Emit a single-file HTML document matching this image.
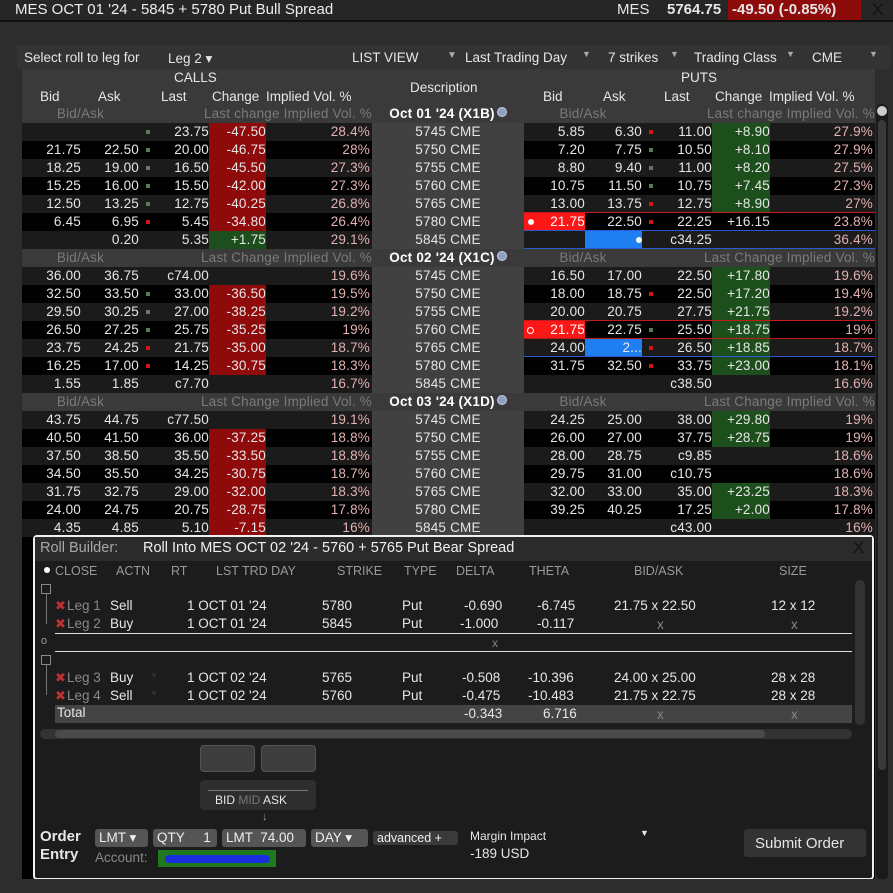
<!DOCTYPE html>
<html><head><meta charset="utf-8"><style>
*{margin:0;padding:0;box-sizing:border-box}
body{width:893px;height:893px;background:#2d2d2d;font-family:"Liberation Sans",sans-serif;color:#e6e6e6;overflow:hidden;position:relative;font-size:13.5px}
.abs{position:absolute}
.top{left:0;top:0;width:893px;height:22px;background:#262626;border-bottom:2px solid #111}
.r{position:absolute;left:22px;width:853px;height:18px;display:flex;line-height:18px;font-size:13.5px;letter-spacing:.2px}
.r i{font-style:normal;display:block;height:18px;text-align:right;white-space:nowrap;position:relative}
.b1{width:59px}.a1{width:58px}.m1{width:18px}.l1{width:52px}.h1{width:57px}.v1{width:106px;padding-right:2px}
.d{width:152px;text-align:center!important;background:#414141}
.b2{width:61px}.a2{width:57px}.m2{width:16px}.l2{width:54px}.h2{width:58px}.v2{width:105px;padding-right:2px}
.v1,.v2{color:#e3b1b1}
.o{background:#1b1b1b}.e{background:#000}
.R{background:#8f0a0a}.G{background:#1d4f1d}
s{position:absolute;width:4px;height:4px;top:7px;left:7px}
s.g{background:#5d7a5d}s.rd{background:#d01515}
.sh{background:#3a3a3a;color:#7a7a7a}
.sh .d{color:#fff;font-weight:bold;background:#3a3a3a}
.RB{background:#ff1717!important;color:#fff}.BL{background:#1f7ff0!important}
.dot{position:absolute;width:6px;height:6px;border-radius:50%;background:#fff;top:6px}
.q{display:inline-block;width:10px;height:10px;border-radius:50%;background:#8aa0c8;vertical-align:1px;margin-left:2px;border:1px solid #ccd}
.rb{position:absolute;left:33px;top:535px;width:841px;height:345px;border:2px solid #f0f0f0;border-radius:4px;background:#1c1c1c}
.t{position:absolute;white-space:nowrap}
.hd{color:#9a9a9a;font-size:12.5px}
.gr{color:#888}
.xr{color:#b33;font-size:13px}
.btn{position:absolute;background:#555;border-radius:3px;height:18px;line-height:18px;color:#eee;font-size:13.5px;padding:0 4px}
</style></head><body>
<div class="abs top"></div>
<div class="t" style="left:15px;top:1px;font-size:15px;color:#ededed">MES OCT 01 '24 - 5845 + 5780 Put Bull Spread</div>
<div class="t" style="left:617px;top:1px;font-size:15px">MES</div>
<div class="t" style="left:667px;top:1px;font-size:15px;font-weight:bold">5764.75</div>
<div class="abs" style="left:728px;top:0;width:133px;height:20px;background:#8e0b0b"></div>
<div class="t" style="left:732px;top:1px;font-size:15px;font-weight:bold">-49.50 (-0.85%)</div>
<div class="t" style="left:872px;top:0px;font-size:17px;color:#111">X</div>
<div class="abs" style="left:17px;top:45px;width:873px;height:24px;background:#333"></div>
<div class="t" style="left:24px;top:50px;font-size:13.5px">Select roll to leg for</div>
<div class="t" style="left:168px;top:51px;font-size:13.5px">Leg 2 ▾</div>
<div class="t" style="left:352px;top:50px">LIST VIEW</div><div class="t" style="left:447px;top:50px;font-size:10px;color:#aaa">▼</div>
<div class="t" style="left:465px;top:50px">Last Trading Day</div><div class="t" style="left:582px;top:49px;font-size:9px;color:#aaa">▼</div>
<div class="t" style="left:608px;top:50px">7 strikes</div><div class="t" style="left:670px;top:49px;font-size:9px;color:#aaa">▼</div>
<div class="t" style="left:694px;top:50px">Trading Class</div><div class="t" style="left:786px;top:49px;font-size:9px;color:#aaa">▼</div>
<div class="t" style="left:812px;top:50px">CME</div><div class="t" style="left:869px;top:49px;font-size:9px;color:#aaa">▼</div>
<div class="abs" style="left:22px;top:69px;width:853px;height:36px;background:#3a3a3a"></div>
<div class="t" style="left:174px;top:70px">CALLS</div>
<div class="t" style="left:681px;top:70px">PUTS</div>
<div class="t" style="left:410px;top:80px">Description</div>
<div class="t" style="left:40px;top:89px">Bid</div><div class="t" style="left:98px;top:89px">Ask</div><div class="t" style="left:161px;top:89px">Last</div><div class="t" style="left:212px;top:89px">Change</div><div class="t" style="left:266px;top:89px">Implied Vol. %</div>
<div class="t" style="left:543px;top:89px">Bid</div><div class="t" style="left:603px;top:89px">Ask</div><div class="t" style="left:664px;top:89px">Last</div><div class="t" style="left:715px;top:89px">Change</div><div class="t" style="left:769px;top:89px">Implied Vol. %</div>
<div class="abs" style="left:876px;top:104px;width:12px;height:776px;background:#1a1a1a;border-radius:6px"></div>
<div class="abs" style="left:877px;top:106px;width:10px;height:10px;background:#ccc;border-radius:5px"></div>
<div class="abs" style="left:878px;top:120px;width:8px;height:650px;background:#3a3a3a;border-radius:4px"></div>

<!-- Oct 01 -->
<div class="r sh" style="top:105px"><i style="width:117px;text-align:center">Bid/Ask</i><i style="width:233px">Last change Implied Vol. %</i><i class="d">Oct 01 '24 (X1B)<span class="q"></span></i><i style="width:118px;text-align:center">Bid/Ask</i><i style="width:233px">Last change Implied Vol. %</i></div>
<div class="r o" style="top:123px"><i class="b1"></i><i class="a1"></i><i class="m1"><s class="g"></s></i><i class="l1">23.75</i><i class="h1 R">-47.50</i><i class="v1">28.4%</i><i class="d">5745 CME</i><i class="b2">5.85</i><i class="a2">6.30</i><i class="m2"><s class="rd"></s></i><i class="l2">11.00</i><i class="h2 G">+8.90</i><i class="v2">27.9%</i></div>
<div class="r e" style="top:141px"><i class="b1">21.75</i><i class="a1">22.50</i><i class="m1"><s class="g"></s></i><i class="l1">20.00</i><i class="h1 R">-46.75</i><i class="v1">28%</i><i class="d">5750 CME</i><i class="b2">7.20</i><i class="a2">7.75</i><i class="m2"><s class="g"></s></i><i class="l2">10.50</i><i class="h2 G">+8.10</i><i class="v2">27.9%</i></div>
<div class="r o" style="top:159px"><i class="b1">18.25</i><i class="a1">19.00</i><i class="m1"><s class="g"></s></i><i class="l1">16.50</i><i class="h1 R">-45.50</i><i class="v1">27.3%</i><i class="d">5755 CME</i><i class="b2">8.80</i><i class="a2">9.40</i><i class="m2"><s class="g"></s></i><i class="l2">11.00</i><i class="h2 G">+8.20</i><i class="v2">27.5%</i></div>
<div class="r e" style="top:177px"><i class="b1">15.25</i><i class="a1">16.00</i><i class="m1"><s class="g"></s></i><i class="l1">15.50</i><i class="h1 R">-42.00</i><i class="v1">27.3%</i><i class="d">5760 CME</i><i class="b2">10.75</i><i class="a2">11.50</i><i class="m2"><s class="g"></s></i><i class="l2">10.75</i><i class="h2 G">+7.45</i><i class="v2">27.3%</i></div>
<div class="r o" style="top:195px"><i class="b1">12.50</i><i class="a1">13.25</i><i class="m1"><s class="g"></s></i><i class="l1">12.75</i><i class="h1 R">-40.25</i><i class="v1">26.8%</i><i class="d">5765 CME</i><i class="b2">13.00</i><i class="a2">13.75</i><i class="m2"><s class="rd"></s></i><i class="l2">12.75</i><i class="h2 G">+8.90</i><i class="v2">27%</i></div>
<div class="r e" style="top:213px"><i class="b1">6.45</i><i class="a1">6.95</i><i class="m1"><s class="rd"></s></i><i class="l1">5.45</i><i class="h1 R">-34.80</i><i class="v1">26.4%</i><i class="d">5780 CME</i><i class="b2 RB"><span class="dot" style="left:4px"></span>21.75</i><i class="a2">22.50</i><i class="m2"><s class="rd"></s></i><i class="l2">22.25</i><i class="h2">+16.15</i><i class="v2">23.8%</i></div>
<div class="r o" style="top:231px"><i class="b1"></i><i class="a1">0.20</i><i class="m1"></i><i class="l1">5.35</i><i class="h1 G">+1.75</i><i class="v1">29.1%</i><i class="d">5845 CME</i><i class="b2"></i><i class="a2 BL"><span class="dot" style="left:51px"></span></i><i class="m2"></i><i class="l2">c34.25</i><i class="h2"></i><i class="v2">36.4%</i></div>
<div class="abs" style="left:524px;top:212px;width:351px;height:1px;background:#c21b1b"></div>
<div class="abs" style="left:524px;top:230px;width:351px;height:1px;background:#2a5ad0"></div>
<div class="abs" style="left:524px;top:248px;width:351px;height:1px;background:#2a5ad0"></div>

<!-- Oct 02 -->
<div class="r sh" style="top:249px"><i style="width:117px;text-align:center">Bid/Ask</i><i style="width:233px">Last Change Implied Vol. %</i><i class="d">Oct 02 '24 (X1C)<span class="q"></span></i><i style="width:118px;text-align:center">Bid/Ask</i><i style="width:233px">Last Change Implied Vol. %</i></div>
<div class="r o" style="top:267px"><i class="b1">36.00</i><i class="a1">36.75</i><i class="m1"></i><i class="l1">c74.00</i><i class="h1"></i><i class="v1">19.6%</i><i class="d">5745 CME</i><i class="b2">16.50</i><i class="a2">17.00</i><i class="m2"></i><i class="l2">22.50</i><i class="h2 G">+17.80</i><i class="v2">19.6%</i></div>
<div class="r e" style="top:285px"><i class="b1">32.50</i><i class="a1">33.50</i><i class="m1"><s class="g"></s></i><i class="l1">33.00</i><i class="h1 R">-36.50</i><i class="v1">19.5%</i><i class="d">5750 CME</i><i class="b2">18.00</i><i class="a2">18.75</i><i class="m2"><s class="rd"></s></i><i class="l2">22.50</i><i class="h2 G">+17.20</i><i class="v2">19.4%</i></div>
<div class="r o" style="top:303px"><i class="b1">29.50</i><i class="a1">30.25</i><i class="m1"><s class="g"></s></i><i class="l1">27.00</i><i class="h1 R">-38.25</i><i class="v1">19.2%</i><i class="d">5755 CME</i><i class="b2">20.00</i><i class="a2">20.75</i><i class="m2"></i><i class="l2">27.75</i><i class="h2 G">+21.75</i><i class="v2">19.2%</i></div>
<div class="r e" style="top:321px"><i class="b1">26.50</i><i class="a1">27.25</i><i class="m1"><s class="g"></s></i><i class="l1">25.75</i><i class="h1 R">-35.25</i><i class="v1">19%</i><i class="d">5760 CME</i><i class="b2 RB"><span class="dot" style="left:3px;background:none;border:1px solid #fff;width:7px;height:7px"></span>21.75</i><i class="a2">22.75</i><i class="m2"><s class="g"></s></i><i class="l2">25.50</i><i class="h2 G">+18.75</i><i class="v2">19%</i></div>
<div class="r o" style="top:339px"><i class="b1">23.75</i><i class="a1">24.25</i><i class="m1"><s class="rd"></s></i><i class="l1">21.75</i><i class="h1 R">-35.00</i><i class="v1">18.7%</i><i class="d">5765 CME</i><i class="b2">24.00</i><i class="a2 BL">2...</i><i class="m2"><s class="rd"></s></i><i class="l2">26.50</i><i class="h2 G">+18.85</i><i class="v2">18.7%</i></div>
<div class="r e" style="top:357px"><i class="b1">16.25</i><i class="a1">17.00</i><i class="m1"><s class="rd"></s></i><i class="l1">14.25</i><i class="h1 R">-30.75</i><i class="v1">18.3%</i><i class="d">5780 CME</i><i class="b2">31.75</i><i class="a2">32.50</i><i class="m2"><s class="rd"></s></i><i class="l2">33.75</i><i class="h2 G">+23.00</i><i class="v2">18.1%</i></div>
<div class="r o" style="top:375px"><i class="b1">1.55</i><i class="a1">1.85</i><i class="m1"></i><i class="l1">c7.70</i><i class="h1"></i><i class="v1">16.7%</i><i class="d">5845 CME</i><i class="b2"></i><i class="a2"></i><i class="m2"></i><i class="l2">c38.50</i><i class="h2"></i><i class="v2">16.6%</i></div>
<div class="abs" style="left:524px;top:320px;width:351px;height:1px;background:#c21b1b"></div>
<div class="abs" style="left:524px;top:338px;width:351px;height:1px;background:#c21b1b"></div>
<div class="abs" style="left:524px;top:356px;width:351px;height:1px;background:#2a5ad0"></div>

<!-- Oct 03 -->
<div class="r sh" style="top:393px"><i style="width:117px;text-align:center">Bid/Ask</i><i style="width:233px">Last Change Implied Vol. %</i><i class="d">Oct 03 '24 (X1D)<span class="q"></span></i><i style="width:118px;text-align:center">Bid/Ask</i><i style="width:233px">Last Change Implied Vol. %</i></div>
<div class="r o" style="top:411px"><i class="b1">43.75</i><i class="a1">44.75</i><i class="m1"></i><i class="l1">c77.50</i><i class="h1"></i><i class="v1">19.1%</i><i class="d">5745 CME</i><i class="b2">24.25</i><i class="a2">25.00</i><i class="m2"></i><i class="l2">38.00</i><i class="h2 G">+29.80</i><i class="v2">19%</i></div>
<div class="r e" style="top:429px"><i class="b1">40.50</i><i class="a1">41.50</i><i class="m1"></i><i class="l1">36.00</i><i class="h1 R">-37.25</i><i class="v1">18.8%</i><i class="d">5750 CME</i><i class="b2">26.00</i><i class="a2">27.00</i><i class="m2"></i><i class="l2">37.75</i><i class="h2 G">+28.75</i><i class="v2">19%</i></div>
<div class="r o" style="top:447px"><i class="b1">37.50</i><i class="a1">38.50</i><i class="m1"></i><i class="l1">35.50</i><i class="h1 R">-33.50</i><i class="v1">18.8%</i><i class="d">5755 CME</i><i class="b2">28.00</i><i class="a2">28.75</i><i class="m2"></i><i class="l2">c9.85</i><i class="h2"></i><i class="v2">18.6%</i></div>
<div class="r e" style="top:465px"><i class="b1">34.50</i><i class="a1">35.50</i><i class="m1"></i><i class="l1">34.25</i><i class="h1 R">-30.75</i><i class="v1">18.7%</i><i class="d">5760 CME</i><i class="b2">29.75</i><i class="a2">31.00</i><i class="m2"></i><i class="l2">c10.75</i><i class="h2"></i><i class="v2">18.6%</i></div>
<div class="r o" style="top:483px"><i class="b1">31.75</i><i class="a1">32.75</i><i class="m1"></i><i class="l1">29.00</i><i class="h1 R">-32.00</i><i class="v1">18.3%</i><i class="d">5765 CME</i><i class="b2">32.00</i><i class="a2">33.00</i><i class="m2"></i><i class="l2">35.00</i><i class="h2 G">+23.25</i><i class="v2">18.3%</i></div>
<div class="r e" style="top:501px"><i class="b1">24.00</i><i class="a1">24.75</i><i class="m1"></i><i class="l1">20.75</i><i class="h1 R">-28.75</i><i class="v1">17.8%</i><i class="d">5780 CME</i><i class="b2">39.25</i><i class="a2">40.25</i><i class="m2"></i><i class="l2">17.25</i><i class="h2 G">+2.00</i><i class="v2">17.8%</i></div>
<div class="r o" style="top:519px"><i class="b1">4.35</i><i class="a1">4.85</i><i class="m1"></i><i class="l1">5.10</i><i class="h1 R">-7.15</i><i class="v1">16%</i><i class="d">5845 CME</i><i class="b2"></i><i class="a2"></i><i class="m2"></i><i class="l2">c43.00</i><i class="h2"></i><i class="v2">16%</i></div>
<div class="abs" style="left:22px;top:537px;width:853px;height:343px;background:#000"></div>

<!-- Roll builder -->
<div class="rb"></div>
<div class="abs" style="left:35px;top:537px;width:837px;height:24px;background:#2b2b2b"></div>
<div class="t" style="left:40px;top:540px;font-size:14.5px;color:#a8a8a8">Roll Builder:</div>
<div class="t" style="left:143px;top:540px;font-size:14.5px;color:#f0f0f0">Roll Into MES OCT 02 '24 - 5760 + 5765 Put Bear Spread</div>
<div class="t" style="left:853px;top:538px;font-size:17px;color:#111">X</div>
<div class="abs" style="left:44px;top:567px;width:6px;height:6px;border-radius:50%;background:#fff"></div>
<div class="t hd" style="left:55px;top:564px">CLOSE</div><div class="t hd" style="left:116px;top:564px">ACTN</div><div class="t hd" style="left:171px;top:564px">RT</div><div class="t hd" style="left:216px;top:564px">LST TRD DAY</div><div class="t hd" style="left:337px;top:564px">STRIKE</div><div class="t hd" style="left:404px;top:564px">TYPE</div><div class="t hd" style="left:456px;top:564px">DELTA</div><div class="t hd" style="left:529px;top:564px">THETA</div><div class="t hd" style="left:634px;top:564px">BID/ASK</div><div class="t hd" style="left:779px;top:564px">SIZE</div>
<div class="abs" style="left:41px;top:584px;width:10px;height:10px;border:1px solid #888"></div>
<div class="abs" style="left:46px;top:594px;width:1px;height:30px;background:#777"></div>
<div class="abs" style="left:41px;top:655px;width:10px;height:10px;border:1px solid #888"></div>
<div class="abs" style="left:46px;top:665px;width:1px;height:30px;background:#777"></div>
<div class="t" style="left:41px;top:635px;font-size:11px;color:#999">o</div>
<div class="abs" style="left:55px;top:633px;width:797px;height:1px;background:#ddd"></div>
<div class="abs" style="left:55px;top:651px;width:797px;height:1px;background:#ddd"></div>
<div class="t" style="left:492px;top:636px;font-size:12px;color:#888">x</div>

<div class="t xr" style="left:55px;top:598px">✖</div><div class="t gr" style="left:67px;top:598px">Leg 1</div><div class="t" style="left:110px;top:598px">Sell</div><div class="t" style="left:187px;top:598px">1 OCT 01 '24</div><div class="t" style="left:322px;top:598px">5780</div><div class="t" style="left:402px;top:598px">Put</div><div class="t" style="left:464px;top:598px">-0.690</div><div class="t" style="left:537px;top:598px">-6.745</div><div class="t" style="left:614px;top:598px">21.75 x 22.50</div><div class="t" style="left:771px;top:598px">12 x 12</div>
<div class="t xr" style="left:55px;top:616px">✖</div><div class="t gr" style="left:67px;top:616px">Leg 2</div><div class="t" style="left:110px;top:616px">Buy</div><div class="t" style="left:187px;top:616px">1 OCT 01 '24</div><div class="t" style="left:322px;top:616px">5845</div><div class="t" style="left:402px;top:616px">Put</div><div class="t" style="left:460px;top:616px">-1.000</div><div class="t" style="left:537px;top:616px">-0.117</div><div class="t gr" style="left:657px;top:617px">x</div><div class="t gr" style="left:791px;top:617px">x</div>
<div class="t xr" style="left:55px;top:670px">✖</div><div class="t gr" style="left:67px;top:670px">Leg 3</div><div class="t" style="left:110px;top:670px">Buy</div><div class="t" style="left:150px;top:671px;font-size:8px;color:#333">▼</div><div class="t" style="left:187px;top:670px">1 OCT 02 '24</div><div class="t" style="left:322px;top:670px">5765</div><div class="t" style="left:402px;top:670px">Put</div><div class="t" style="left:462px;top:670px">-0.508</div><div class="t" style="left:528px;top:670px">-10.396</div><div class="t" style="left:614px;top:670px">24.00 x 25.00</div><div class="t" style="left:771px;top:670px">28 x 28</div>
<div class="t xr" style="left:55px;top:688px">✖</div><div class="t gr" style="left:67px;top:688px">Leg 4</div><div class="t" style="left:110px;top:688px">Sell</div><div class="t" style="left:150px;top:689px;font-size:8px;color:#333">▼</div><div class="t" style="left:187px;top:688px">1 OCT 02 '24</div><div class="t" style="left:322px;top:688px">5760</div><div class="t" style="left:402px;top:688px">Put</div><div class="t" style="left:462px;top:688px">-0.475</div><div class="t" style="left:528px;top:688px">-10.483</div><div class="t" style="left:614px;top:688px">21.75 x 22.75</div><div class="t" style="left:771px;top:688px">28 x 28</div>
<div class="abs" style="left:55px;top:705px;width:797px;height:18px;background:#444"></div>
<div class="t" style="left:57px;top:705px">Total</div><div class="t" style="left:464px;top:706px">-0.343</div><div class="t" style="left:543px;top:706px">6.716</div><div class="t gr" style="left:657px;top:707px">x</div><div class="t gr" style="left:791px;top:707px">x</div>
<div class="abs" style="left:855px;top:580px;width:10px;height:145px;background:#333;border-radius:5px"></div>
<div class="abs" style="left:40px;top:729px;width:812px;height:10px;background:#333;border-radius:5px"></div>
<div class="abs" style="left:55px;top:730px;width:710px;height:8px;background:#4a4a4a;border-radius:4px"></div>
<div class="abs" style="left:200px;top:745px;width:55px;height:27px;background:#3d3d3d;border-radius:4px;border:1px solid #555"></div>
<div class="abs" style="left:261px;top:745px;width:55px;height:27px;background:#3d3d3d;border-radius:4px;border:1px solid #555"></div>
<div class="abs" style="left:200px;top:780px;width:116px;height:30px;background:#2e2e2e;border-radius:4px"></div>
<div class="abs" style="left:208px;top:790px;width:100px;height:1px;background:#777"></div>
<div class="t" style="left:215px;top:793px;font-size:12px">BID <span style="color:#777">MID</span> ASK</div>
<div class="t" style="left:262px;top:811px;font-size:11px;color:#999">↓</div>
<div class="t" style="left:40px;top:828px;font-size:15px;font-weight:bold">Order</div>
<div class="t" style="left:40px;top:846px;font-size:15px;font-weight:bold">Entry</div>
<div class="btn" style="left:95px;top:829px;width:53px">LMT ▾</div>
<div class="btn" style="left:153px;top:829px;width:64px">QTY &nbsp;&nbsp;&nbsp;&nbsp;1</div>
<div class="btn" style="left:222px;top:829px;width:84px">LMT &nbsp;74.00</div>
<div class="btn" style="left:311px;top:829px;width:57px">DAY ▾</div>
<div class="btn" style="left:373px;top:831px;width:85px;height:14px;line-height:14px;font-size:12.5px;background:#3a3a3a">advanced +</div>
<div class="t" style="left:95px;top:850px;color:#888">Account:</div>
<div class="abs" style="left:158px;top:850px;width:118px;height:17px;background:#1f7a1f"></div>
<div class="abs" style="left:165px;top:855px;width:105px;height:8px;background:#1a2ee0;border-radius:4px"></div>
<div class="t" style="left:470px;top:829px;font-size:12px">Margin Impact</div>
<div class="t" style="left:640px;top:828px;font-size:9px">▼</div>
<div class="t" style="left:470px;top:846px">-189 USD</div>
<div class="abs" style="left:744px;top:829px;width:122px;height:28px;background:#333;border-radius:3px"></div>
<div class="t" style="left:755px;top:835px;font-size:15px">Submit Order</div>
<div class="abs" style="left:0;top:879px;width:893px;height:14px;background:#2d2d2d"></div>
</body></html>
